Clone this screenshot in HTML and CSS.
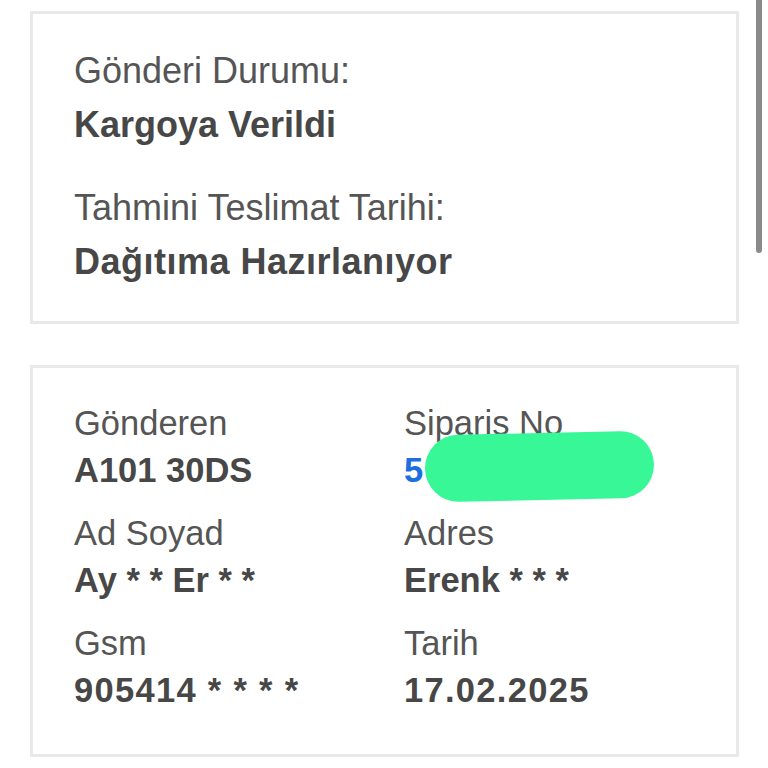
FILE: index.html
```html
<!DOCTYPE html>
<html lang="tr">
<head>
<meta charset="utf-8">
<link rel="stylesheet" href="styles.css">
</head>
<body>
<div class="page">
  <section class="card status">
    <div class="group">
      <div class="label">Gönderi Durumu:</div>
      <div class="value">Kargoya Verildi</div>
    </div>
    <div class="group">
      <div class="label">Tahmini Teslimat Tarihi:</div>
      <div class="value wide">Dağıtıma Hazırlanıyor</div>
    </div>
  </section>
  <section class="card details">
    <div class="cell">
      <div class="label">Gönderen</div>
      <div class="value">A101 30DS</div>
    </div>
    <div class="cell order">
      <div class="label">Siparis No</div>
      <div class="value link">5</div>
      <div class="blob"></div>
    </div>
    <div class="cell">
      <div class="label">Ad Soyad</div>
      <div class="value">Ay * * Er * *</div>
    </div>
    <div class="cell">
      <div class="label">Adres</div>
      <div class="value">Erenk * * *</div>
    </div>
    <div class="cell">
      <div class="label">Gsm</div>
      <div class="value num">905414 * * * *</div>
    </div>
    <div class="cell">
      <div class="label">Tarih</div>
      <div class="value num">17.02.2025</div>
    </div>
  </section>
</div>
<div class="scrollbar"></div>
</body>
</html>
```
FILE: styles.css
```css
html, body {
  margin: 0;
  padding: 0;
  background: #ffffff;
}
body {
  font-family: "Liberation Sans", Arial, sans-serif;
  width: 768px;
  height: 768px;
  overflow: hidden;
  position: relative;
}
.page {
  padding: 11px 0 0 30px;
  display: flex;
  flex-direction: column;
  gap: 41px;
}
.card {
  width: 709px;
  box-sizing: border-box;
  border: 3px solid #e9e9e9;
  background: #fff;
}
.status {
  padding: 30px 41px 32px;
  display: flex;
  flex-direction: column;
  gap: 29px;
  font-size: 36px;
}
.status .label,
.status .value {
  line-height: 54px;
  white-space: nowrap;
}
.label {
  color: #555555;
  font-weight: 400;
}
.value {
  color: #474747;
  font-weight: 700;
}
.wide {
  letter-spacing: 0.5px;
}
.details {
  padding: 32px 41px 40px;
  display: grid;
  grid-template-columns: 330px 1fr;
  row-gap: 16px;
  font-size: 34.5px;
}
.details .label,
.details .value {
  line-height: 47px;
  white-space: nowrap;
}
.num {
  letter-spacing: 1.3px;
}
.cell {
  position: relative;
}
.link {
  color: #1b6fe0;
}
.blob {
  position: absolute;
  left: 21px;
  top: 33px;
  width: 229px;
  height: 67px;
  border-radius: 34px;
  background: #37f797;
  transform: rotate(-1.2deg);
}
.scrollbar {
  position: absolute;
  left: 756px;
  top: -10px;
  width: 6px;
  height: 263px;
  border-radius: 3px;
  background: #8a8a8a;
}
```
